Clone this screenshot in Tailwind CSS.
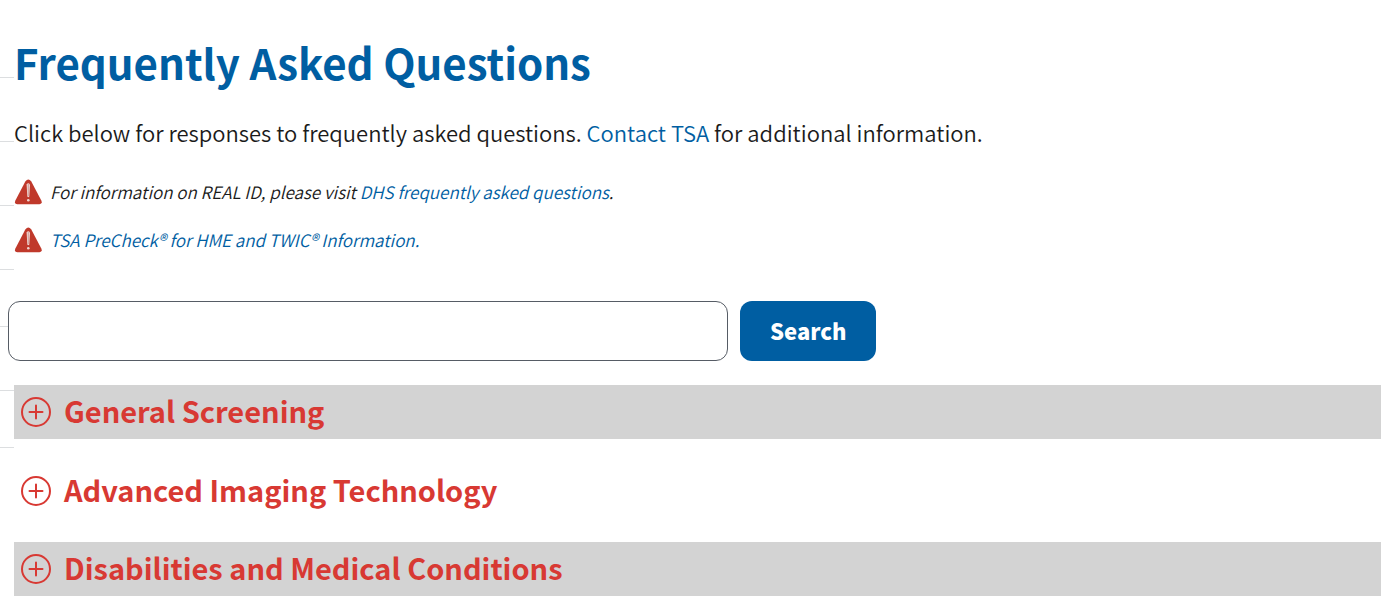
<!DOCTYPE html>
<html lang="en">
<head>
<meta charset="utf-8">
<meta name="viewport" content="width=device-width, initial-scale=1">
<title>Frequently Asked Questions</title>
<script src="https://cdn.jsdelivr.net/npm/@tailwindcss/browser@4"></script>
</head>
<body class="bg-white font-['Noto_Sans_CJK_SC','Noto_Sans',sans-serif] text-[#1b1b1b]">
<svg class="hidden" aria-hidden="true">
  <symbol id="warning" viewBox="0 0 28 26">
    <path d="M11.300 2.400Q14.300 -1.600 17.300 2.400L27.300 21.500Q28.700 25 25.500 25.300H3.300Q0 25 1.400 21.500Z" fill="#c0392b"/>
    <path d="M12.600 5.500Q14.300 3 16 5.500L15.300 17.500Q14.300 19 13.300 17.500Z" fill="#eed5d1"/>
    <path d="M14.300 5v12" stroke="#c78a83" stroke-width=".7"/>
    <circle cx="14.300" cy="21.300" r="1.300" fill="#eed5d1"/>
  </symbol>
  <symbol id="plus" viewBox="0 0 30 30">
    <circle cx="15" cy="15" r="14" fill="none" stroke="#d83933" stroke-width="2"/>
    <path d="M15 8.500v13M8.500 15h13" stroke="#d83933" stroke-width="2" stroke-linecap="round"/>
  </symbol>
</svg>
<div class="flex">
  <div class="w-3.5 shrink-0 pt-3.5" aria-hidden="true">
    <div class="h-16 border-b border-[#dcdee0]"></div>
    <div class="h-16 border-b border-[#dcdee0]"></div>
    <div class="h-16 border-b border-[#dcdee0]"></div>
    <div class="h-16 border-b border-[#dcdee0]"></div>
    <div class="h-[57px] border-b border-[#dcdee0]"></div>
    <div class="h-16 border-b border-[#dcdee0]"></div>
    <div class="h-[57px] border-b border-[#dcdee0]"></div>
  </div>
  <main class="min-w-0 flex-1 pt-[34px] pr-[11px]">
    <h1 class="text-[42px] leading-[56px] font-bold text-[#005ea2]">Frequently Asked Questions</h1>
    <p class="mt-6 font-['Noto_Sans_CJK_SC_DemiLight','Noto_Sans_CJK_SC',sans-serif] text-[22px] leading-9">Click below for responses to frequently asked questions. <a href="#" class="text-[#005ea2]">Contact TSA</a> for additional information.</p>
    <div class="mt-[26px] flex items-center gap-2 font-['Noto_Sans_CJK_SC_DemiLight','Noto_Sans_CJK_SC',sans-serif] text-[17px] leading-8 italic">
      <svg class="h-[26px] w-7"><use href="#warning"/></svg>
      <p>For information on REAL ID, please visit <a href="#" class="text-[#005ea2]">DHS frequently asked questions</a>.</p>
    </div>
    <div class="mt-4 flex items-center gap-2 font-['Noto_Sans_CJK_SC_DemiLight','Noto_Sans_CJK_SC',sans-serif] text-[17px] leading-8 italic">
      <svg class="h-[26px] w-7"><use href="#warning"/></svg>
      <a href="#" class="text-[#005ea2]">TSA PreCheck® for HME and TWIC® Information.</a>
    </div>
    <form class="mt-[45px] -ml-1.5 flex gap-3">
      <input type="search" aria-label="Search questions" class="h-[60px] w-[720px] min-w-0 rounded-xl border border-[#565c65] bg-white px-4 text-[22px]">
      <button type="button" class="h-[60px] rounded-xl bg-[#005ea2] px-[30px] pb-0.5 text-[22px] font-black text-white">Search</button>
    </form>
    <div class="mt-6 flex flex-col gap-6 text-[29px] leading-[50px] font-bold text-[#d83933]">
      <h2><button type="button" aria-expanded="false" class="flex h-[54px] w-full items-center gap-[13px] bg-[#d3d3d3] pl-[7px] text-left"><svg class="size-[30px] shrink-0"><use href="#plus"/></svg><span class="pb-1">General Screening</span></button></h2>
      <h2><button type="button" aria-expanded="false" class="flex h-[55px] w-full items-center gap-[13px] pl-[7px] text-left"><svg class="size-[30px] shrink-0"><use href="#plus"/></svg><span class="pb-1">Advanced Imaging Technology</span></button></h2>
      <h2><button type="button" aria-expanded="false" class="flex h-[54px] w-full items-center gap-[13px] bg-[#d3d3d3] pl-[7px] text-left"><svg class="size-[30px] shrink-0"><use href="#plus"/></svg><span class="pb-1">Disabilities and Medical Conditions</span></button></h2>
    </div>
  </main>
</div>
</body>
</html>
